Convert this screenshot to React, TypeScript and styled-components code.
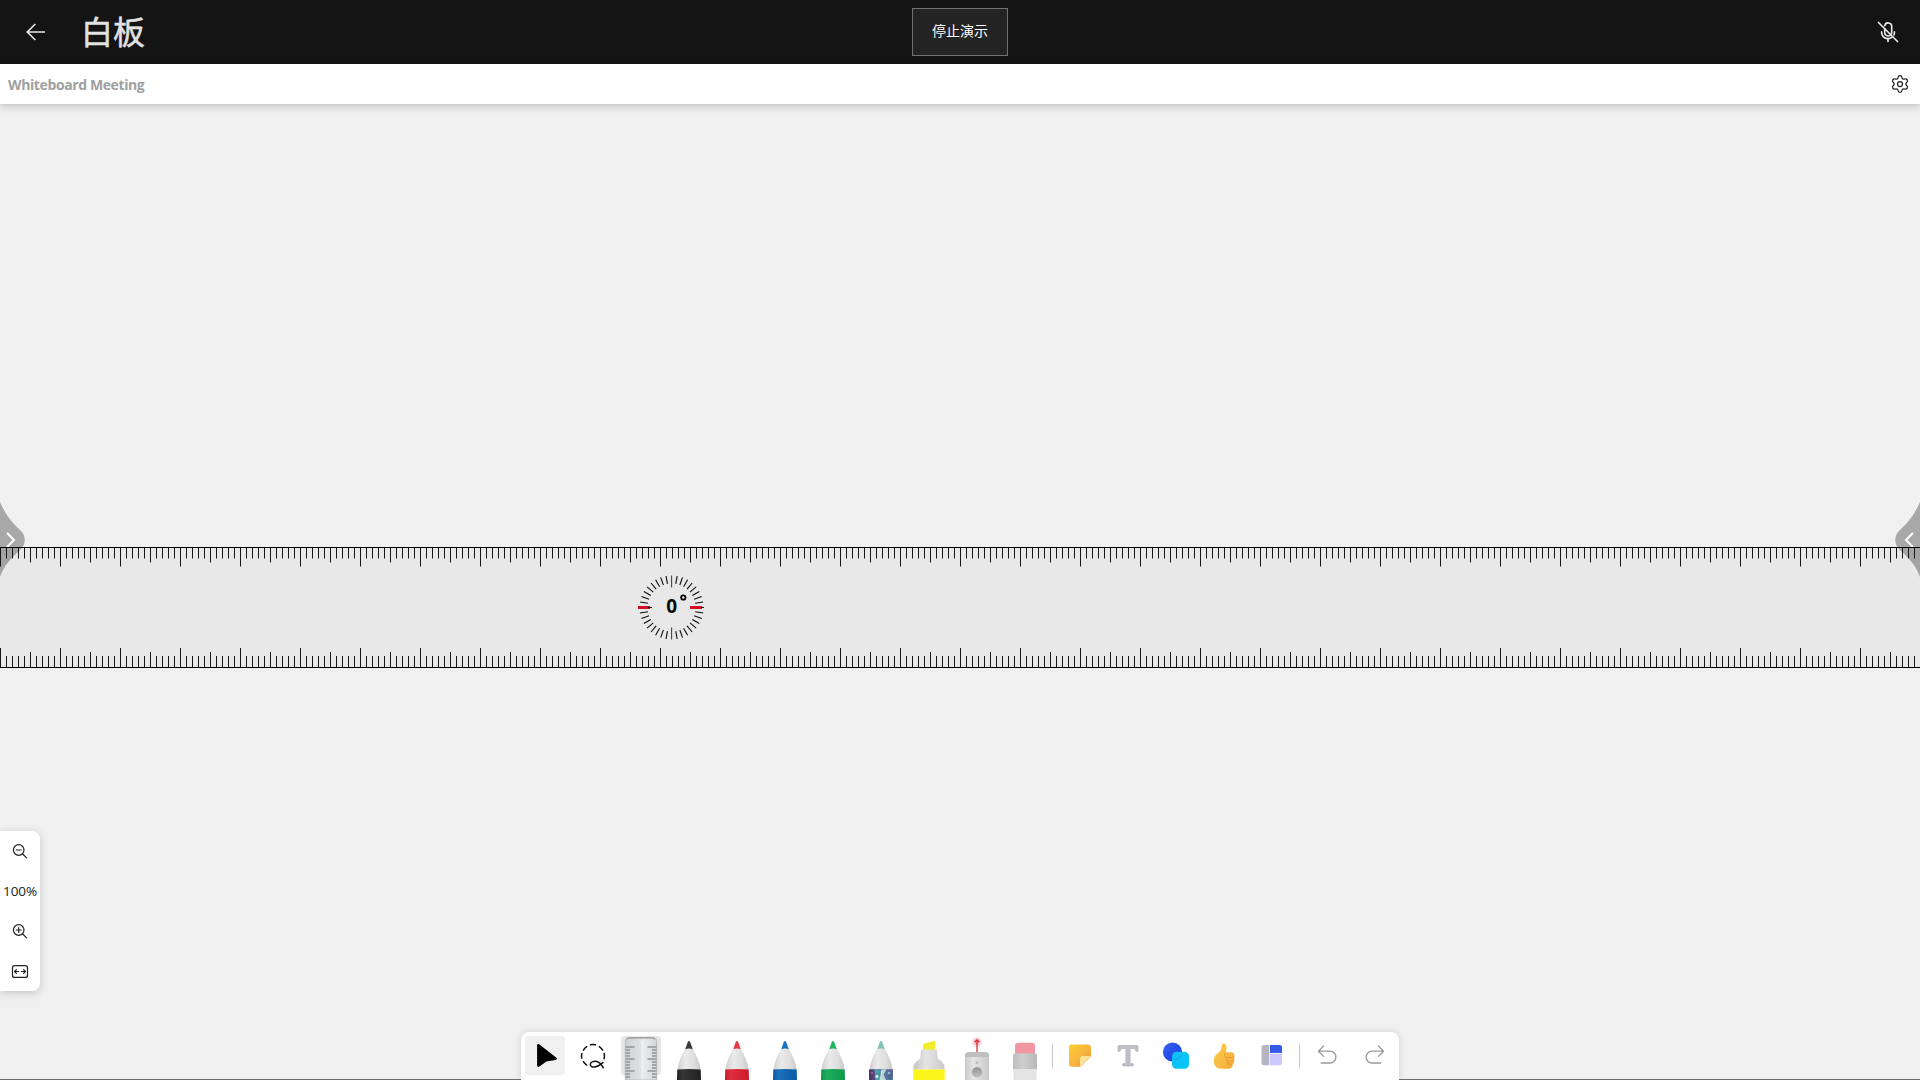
import React from "react";
import styled, { createGlobalStyle } from "styled-components";
import { Settings } from "lucide-react";

const GlobalStyle = createGlobalStyle`
  * { box-sizing: border-box; }
  html, body { margin: 0; padding: 0; overflow: hidden; }
  body { font-family: "Open Sans", "Noto Sans", "Noto Sans CJK SC", sans-serif; }
  button { border: 0; padding: 0; background: none; font: inherit; color: inherit; }
  svg { display: block; }
`;

const Screen = styled.div`
  display: flex;
  flex-direction: column;
  width: 1920px;
  height: 1080px;
  overflow: hidden;
  background: #f0f0f0;
`;

const TopBar = styled.header`
  display: grid;
  grid-template-columns: 1fr auto 1fr;
  align-items: center;
  flex: none;
  height: 64px;
  padding: 0 20px 0 24px;
  background: #141414;
  color: #e6e6e6;
`;

const TopLeft = styled.div`
  display: flex;
  align-items: center;
  gap: 33px;
`;

const TopRight = styled.div`
  display: flex;
  justify-content: flex-end;
`;

const PageTitle = styled.h1`
  margin: 0;
  padding-bottom: 3px;
  font: 400 32px/61px "Noto Sans CJK SC", sans-serif;
  color: #e2e2e2;
  -webkit-text-stroke: 0.5px #e2e2e2;
`;

const StopButton = styled.button`
  width: 96px;
  height: 48px;
  margin-right: 4px;
  border: 1px solid #727272;
  background: #242424;
  font: 400 14px/20px "Noto Sans CJK SC", sans-serif;
  color: #fff;
  padding-bottom: 4px;
`;

const MeetingBar = styled.div`
  position: relative;
  z-index: 2;
  display: flex;
  align-items: center;
  justify-content: space-between;
  flex: none;
  height: 40px;
  padding: 0 10px 0 8px;
  background: #fff;
  color: #222;
  box-shadow: 0 2px 8px rgba(0, 0, 0, 0.22);
`;

const MeetingName = styled.span`
  font: 700 14px/40px "Open Sans", "Noto Sans", sans-serif;
  letter-spacing: -0.39px;
  padding-top: 1px;
  color: #a0a0a0;
`;

const Board = styled.main`
  position: relative;
  flex: 1;
  display: flex;
  flex-direction: column;
  justify-content: flex-end;
  border-bottom: 1px solid #6b6b6b;
`;

const SideHandle = styled.button<{ $side: "left" | "right" }>`
  position: absolute;
  top: 397px;
  ${(p) => p.$side}: 0;
  width: 25px;
  height: 76px;
  transform: ${(p) => (p.$side === "right" ? "scaleX(-1)" : "none")};
`;

const RulerOverlay = styled.div`
  position: absolute;
  top: 443px;
  left: 0;
  width: 1920px;
  height: 121px;
`;

const ZoomPanel = styled.aside`
  display: flex;
  flex-direction: column;
  width: 40px;
  height: 160px;
  margin-bottom: 41px;
  background: #fff;
  border-radius: 0 8px 8px 0;
  box-shadow: 0 2px 8px rgba(0, 0, 0, 0.18);
`;

const ZoomButton = styled.button`
  width: 40px;
  height: 40px;
`;

const ZoomLevel = styled.span`
  height: 40px;
  text-align: center;
  font: 400 13.5px/41px "Open Sans", "Noto Sans", sans-serif;
  letter-spacing: -0.1px;
  color: #222;
`;

const ToolDock = styled.footer`
  display: flex;
  justify-content: center;
  height: 48px;
  margin-bottom: -1px;
`;

const Toolbar = styled.div`
  position: relative;
  display: flex;
  width: 878px;
  height: 48px;
  background: #fff;
  border-radius: 8px 8px 0 0;
  box-shadow: 0 0 6px rgba(0, 0, 0, 0.14);
`;

const ToolButton = styled.button`
  width: 48px;
  height: 48px;
`;

const Divider = styled.i`
  flex: none;
  width: 1px;
  height: 24px;
  margin: 12px 3px;
  background: #c4c4c4;
`;

function BackIcon() {
  return (
    <svg width="24" height="24" viewBox="0 0 24 24" fill="none" stroke="#e6e6e6" strokeWidth="1.7">
      <path d="M21 12H3.5M11.3 4 3.3 12l8 8" />
    </svg>
  );
}

function MutedMicIcon() {
  return (
    <svg width="24" height="24" viewBox="0 0 24 24" fill="none" stroke="#ececec" strokeWidth="1.65" strokeLinecap="round">
      <path d="M8.8 5.6a3.5 3.5 0 0 1 6.9.9v6a3.6 3.6 0 0 1-.7 2M8.7 9v3.5a3.5 3.5 0 0 0 5 3.1" />
      <path d="M5.6 11.7v1a6 6 0 0 0 6 5.9h.8c1.2 0 2.4-.5 3.3-1.2M18.4 11.7v1c0 .8-.2 1.5-.5 2.2M12 18.8v2.7M2.5 2.5l19 19" />
    </svg>
  );
}

function HandleShape() {
  return (
    <svg width="25" height="76" viewBox="0 0 25 76">
      <path d="M0 1C7 17 14 23 21 30C26 35 26 43 21 48C13 56 5 62 0 76Z" fill="#a8a8a8" />
      <path d="m7 32 7 7-7 7" fill="none" stroke="#fff" strokeWidth="2" />
    </svg>
  );
}

const tickLength = (i: number) => (i % 10 === 0 ? 19 : i % 5 === 0 ? 15 : 11);

function Ruler() {
  const ticks = Array.from({ length: 320 }, (_, i) => i);
  const cx = 671.6;
  const cy = 60.5;
  const dial = Array.from({ length: 36 }, (_, i) => i);
  return (
    <svg width="1920" height="121" viewBox="0 0 1920 121">
      <rect width="1920" height="121" fill="rgba(20,20,25,0.034)" />
      <path
        d={ticks.map((i) => `M${i * 6 + 0.5} 0v${tickLength(i) + 0.5}M${i * 6 + 0.5} 121v${-tickLength(i) - 1}`).join("")}
        stroke="#161616"
        strokeWidth="1"
      />
      <path d="M0 .5H1920M0 120.5H1920" stroke="#000" strokeWidth="1" />
      {dial.map((i) => {
        const major = i % 9 === 0;
        const a = (i * 10 * Math.PI) / 180;
        const r1 = major ? 20 : 24;
        const r2 = 32;
        return (
          <line
            key={i}
            x1={cx + Math.sin(a) * r1}
            y1={cy - Math.cos(a) * r1}
            x2={cx + Math.sin(a) * r2}
            y2={cy - Math.cos(a) * r2}
            stroke={major ? "#444" : "#0c0c0c"}
            strokeWidth="1.1"
          />
        );
      })}
      <path d="M638 60.5h12M690 60.5h12" stroke="#cf1020" strokeWidth="3" />
      <path d="M648 60.5h4M701 60.5h3" stroke="#111" strokeWidth="1" />
      <text x="671.6" y="66" textAnchor="middle" fontFamily="Open Sans, Noto Sans, sans-serif" fontWeight="700" fontSize="19" fill="#080808">
        0
      </text>
      <circle cx="683.3" cy="50.5" r="2.2" fill="none" stroke="#080808" strokeWidth="1.8" />
    </svg>
  );
}

function MagnifierIcon({ plus }: { plus?: boolean }) {
  return (
    <svg width="40" height="40" viewBox="0 0 40 40" fill="none" stroke="#222" strokeWidth="1.2" strokeLinecap="round">
      <circle cx="18.7" cy="19" r="5.3" />
      <path d="m22.7 23 3.9 3.9M16.2 19h5" />
      {plus && <path d="M18.7 16.5v5" />}
    </svg>
  );
}

function FitIcon() {
  return (
    <svg width="40" height="40" viewBox="0 0 40 40" fill="none" stroke="#222" strokeWidth="1.2" strokeLinecap="round" strokeLinejoin="round">
      <rect x="12.5" y="14.6" width="15" height="11.8" rx="2" />
      <path d="M18.6 20.5h-4M16.4 18.7l-1.800 1.800 1.800 1.800M21.400 20.500h4M23.600 18.700l1.800 1.800-1.800 1.800" />
    </svg>
  );
}

const Glyph = ({ children }: { children: React.ReactNode }) => (
  <svg width="48" height="48" viewBox="0 0 48 48">
    {children}
  </svg>
);

function ActiveTile({ color }: { color: string }) {
  return <rect x="4" y="4" width="40" height="39.5" rx="4" fill={color} />;
}

function Pen({ id, tip, band, galaxy }: { id: string; tip: string; band: string; galaxy?: boolean }) {
  return (
    <Glyph>
      <defs>
        <linearGradient id={`${id}-cone`}>
          <stop offset="0" stopColor="#cfcfcf" />
          <stop offset=".35" stopColor="#eaeaea" />
          <stop offset=".7" stopColor="#dedede" />
          <stop offset="1" stopColor="#c8c8c8" />
        </linearGradient>
        <linearGradient id={`${id}-shade`}>
          <stop offset="0" stopColor="#000" stopOpacity=".12" />
          <stop offset=".25" stopColor="#fff" stopOpacity=".08" />
          <stop offset="1" stopColor="#000" stopOpacity=".08" />
        </linearGradient>
      </defs>
      <path d="M20.500 16.500C16 24 13 31 12.300 38H35.700C35 31 32 24 27.500 16.500Z" fill={`url(#${id}-cone)`} />
      <path d="M20.200 17.300 22.600 10.400Q24 7.800 25.400 10.400L27.800 17.300Q24 15.900 20.200 17.300Z" fill={tip} />
      <path d="M12.300 37.500Q24 36.700 35.700 37.500L36 48H12Z" fill={band} />
      {galaxy && (
        <g>
          <path d="M12.200 37.500h5.500l1 10.500H12Z" fill="#4c3a72" />
          <path d="M17.500 38l6-.5-2 5 3 5.500h-6Z" fill="#3f9aa8" />
          <path d="M24 37.400h5.500l-3 5 2.500 5.600h-6.500l1-5Z" fill="#bfe0e0" />
          <path d="M30 37.400h5.700l.3 6-4 4Z" fill="#5a66a0" />
          <circle cx="15" cy="41" r="1" fill="#b766b2" />
          <circle cx="20" cy="44.500" r="1.600" fill="#d7f0ee" />
          <circle cx="32" cy="41" r="1.300" fill="#8cc8d4" />
        </g>
      )}
      <path d="M12.300 37.500Q24 36.700 35.700 37.500L36 48H12Z" fill={`url(#${id}-shade)`} />
    </Glyph>
  );
}

function PointerTool() {
  return (
    <Glyph>
      <ActiveTile color="#f0f0f0" />
      <path d="M17.400 13.200 34.600 26.800 25 28.200 17.400 33.600Z" fill="#000" stroke="#000" strokeWidth="2.600" strokeLinejoin="round" />
    </Glyph>
  );
}

function LassoTool() {
  return (
    <Glyph>
      <g fill="none" stroke="#111" strokeWidth="1.500" strokeLinecap="round">
        <path d="M21.500 12.800a11.300 11.300 0 0 1 5 0M30.300 14.700a11.300 11.300 0 0 1 3.300 3.400M35.200 21.500a11.300 11.300 0 0 1-.1 5.200M17.700 14.700a11.300 11.300 0 0 0-3.300 3.400M12.800 21.500a11.300 11.300 0 0 0 0 4.600M14.400 29.700a11.300 11.300 0 0 0 3.400 3.500" />
        <path d="M34.300 35.800C32.500 32.600 30.600 29.300 26.700 29.300c-3 0-5.400 1.500-5.400 3.200 0 1.800 2 2.800 4.400 2.500 4.200-.5 5.900-2.500 8.200-4.400" />
      </g>
    </Glyph>
  );
}

function RulerTool() {
  return (
    <Glyph>
      <defs>
        <linearGradient id="ruler-body">
          <stop offset="0" stopColor="#cfd1d3" />
          <stop offset=".48" stopColor="#dfe0e2" />
          <stop offset=".52" stopColor="#eceeef" />
          <stop offset="1" stopColor="#d4d6d8" />
        </linearGradient>
      </defs>
      <ActiveTile color="#e6e6e6" />
      <path d="M8.300 48V9.500q0-4 4-4h23.400q4 0 4 4V48Z" fill="url(#ruler-body)" stroke="#b0b0b0" strokeWidth=".8" />
      <path d="M10 7.200q1-1.200 3-1.200h22q2 0 3 1.200" fill="none" stroke="#8d8d8d" strokeWidth="1" />
      <path
        d="M8.500 15H17.500M8.500 18H13M8.500 21H13M8.500 24H13M8.500 27H17.500M8.500 30H13M8.500 33H13M8.500 36H13M8.500 39H17.500M8.500 42H13M8.500 45H13M39.500 15H30.500M39.500 18H35M39.500 21H35M39.500 24H35M39.500 27H30.500M39.500 30H35M39.500 33H35M39.500 36H35M39.500 39H30.500M39.500 42H35M39.500 45H35"
        stroke="#929497"
        strokeWidth="1.500"
      />
    </Glyph>
  );
}

function HighlighterTool() {
  return (
    <Glyph>
      <defs>
        <linearGradient id="hl-body">
          <stop offset="0" stopColor="#c6c6c6" />
          <stop offset=".4" stopColor="#e4e4e4" />
          <stop offset="1" stopColor="#cbcbcb" />
        </linearGradient>
      </defs>
      <path d="M18 18V13Q18 11.800 19.300 11.400L29 9.100Q30.300 8.900 30.300 10V18Z" fill="#f2ee2a" />
      <path d="M16 18.500q0-1 1-1h14q1 0 1 1l1 8.500q5.500 3 6.500 7v3.500h-31V34q1-4 6.500-7Z" fill="url(#hl-body)" />
      <path d="M8.300 37.500H39.700V48H8.300Z" fill="#fbf51c" />
    </Glyph>
  );
}

function LaserTool() {
  return (
    <Glyph>
      <defs>
        <linearGradient id="laser-body">
          <stop offset="0" stopColor="#c9c9c9" />
          <stop offset=".35" stopColor="#e5e5e5" />
          <stop offset="1" stopColor="#c9c9c9" />
        </linearGradient>
        <radialGradient id="laser-glow">
          <stop offset="0" stopColor="#e8303e" stopOpacity=".6" />
          <stop offset="1" stopColor="#e8303e" stopOpacity="0" />
        </radialGradient>
        <linearGradient id="laser-knob" x2="0" y2="1">
          <stop offset="0" stopColor="#929292" />
          <stop offset="1" stopColor="#c2c2c2" />
        </linearGradient>
      </defs>
      <circle cx="24" cy="10" r="5.500" fill="url(#laser-glow)" />
      <path d="M24 8V20.500M21.800 10 24 7.800l2.200 2.200" stroke="#da3040" strokeWidth="1.300" fill="none" />
      <path d="M12 48V24q0-4 4-4h16q4 0 4 4V48Z" fill="url(#laser-body)" />
      <path d="M12 25v-1q0-4 4-4h16q4 0 4 4v1Z" fill="#bebebe" />
      <path d="M22.300 31.600 24 29.200l1.700 2.400Z" fill="#aaa" />
      <circle cx="24" cy="40.300" r="5.200" fill="url(#laser-knob)" />
    </Glyph>
  );
}

function EraserTool() {
  return (
    <Glyph>
      <defs>
        <linearGradient id="er-body">
          <stop offset="0" stopColor="#bdbdbd" />
          <stop offset=".4" stopColor="#cecece" />
          <stop offset="1" stopColor="#b9b9b9" />
        </linearGradient>
      </defs>
      <path d="M14 22V14q0-3.300 3.300-3.300h13.400q3.300 0 3.300 3.300v8Z" fill="#f496a2" />
      <path d="M12 37.500V23.500q0-2 2-2.300h20q2 .3 2 2.300v14Z" fill="url(#er-body)" />
      <path d="M12.500 37H35.500V48H12.500Z" fill="#e4e4e4" />
    </Glyph>
  );
}

function NoteTool() {
  return (
    <Glyph>
      <defs>
        <linearGradient id="note-fill" x2="1" y2="1">
          <stop offset="0" stopColor="#fbd02f" />
          <stop offset=".55" stopColor="#f7b340" />
          <stop offset="1" stopColor="#ec8b35" />
        </linearGradient>
      </defs>
      <path d="M16 12.500h16q3 0 3 3V24.500L24.500 34.700H16q-3 0-3-3V15.500q0-3 3-3Z" fill="url(#note-fill)" />
      <path d="M24 34.700V27q0-3 3-3h8Z" fill="#fde39a" />
    </Glyph>
  );
}

function TextTool() {
  return (
    <Glyph>
      <path
        d="M15 13.500h18q1 0 1 1v4.300q0 .7-.8.700h-.8q-.6 0-.8-.7l-.5-2.200h-5V31.500h2.400q.8 0 .8.800v1q0 .8-.8.800h-9q-.8 0-.8-.8v-1q0-.8.800-.8h2.400V16.600h-5l-.5 2.200q-.2.700-.8.700h-.8q-.8 0-.8-.7V14.500q0-1 1-1Z"
        fill="#c2bec8"
        stroke="#aaa6b0"
        strokeWidth=".6"
      />
    </Glyph>
  );
}

function ShapesTool() {
  return (
    <Glyph>
      <defs>
        <linearGradient id="shape-blue" x2="1" y2="1">
          <stop offset="0" stopColor="#3a62e8" />
          <stop offset="1" stopColor="#143df0" />
        </linearGradient>
        <linearGradient id="shape-cyan" x2="1" y2="1">
          <stop offset="0" stopColor="#12bdf4" />
          <stop offset="1" stopColor="#02c8fa" />
        </linearGradient>
      </defs>
      <circle cx="20.500" cy="20" r="9.600" fill="url(#shape-blue)" />
      <rect x="20" y="19.700" width="17" height="17" rx="4.500" fill="url(#shape-cyan)" />
      <path d="M22.500 27.800q4.500 0 7.200-4.800" fill="none" stroke="#169fe8" strokeWidth="1" />
    </Glyph>
  );
}

function ThumbTool() {
  return (
    <Glyph>
      <defs>
        <linearGradient id="thumb-fill" x2="1" y2="1">
          <stop offset="0" stopColor="#ffd04a" />
          <stop offset="1" stopColor="#f4a93a" />
        </linearGradient>
      </defs>
      <path
        d="M22 12.500c.6-1.500 3.400-1.300 4.100.8.900 2.300.2 5.200-.3 6.900h5.800c1.800 0 2.600 1 2.400 2.300.8.700.9 2.200.1 3.200.7 1 .6 2.400-.2 3.200.4 1.200-.1 2.500-1.100 3 .1 3.400-1.500 4.900-4.500 4.900h-6.700c-5 0-7.800-3-7.800-8 0-4.100 2-6.400 5-8.500 2-1.400 2.700-4.300 3.200-7.800Z"
        fill="url(#thumb-fill)"
      />
      <path d="M26 20.600q-2 .8-1.500 3 .4 1.800 2.500 1.900h7M27 25.600q-1.700 1.700.2 3.400h6.500M27.500 29.200q-1 1.500.5 2.800h4.700" fill="none" stroke="#de8d2b" strokeWidth=".7" />
    </Glyph>
  );
}

function TemplateTool() {
  return (
    <Glyph>
      <path d="M16 13h6v20.300h-6q-2.500 0-2.500-2.500V15.500Q13.500 13 16 13Z" fill="#b7b5c5" />
      <path d="M22 13h9.500q2.500 0 2.500 2.500v5.800H22Z" fill="#315be8" />
      <path d="M22 21.700h12v9.100q0 2.500-2.500 2.500H22Z" fill="#cbc9fb" />
      <path d="M21.500 13v20.300M21.500 21.400H34" stroke="#f4f3ff" strokeWidth=".9" />
    </Glyph>
  );
}

function HistoryTool({ forward }: { forward?: boolean }) {
  return (
    <Glyph>
      <path
        d="M20.500 14 15.500 19.200 20.500 24.400M15.500 19.200H27a5.900 5.900 0 0 1 0 11.800H18.200"
        transform={forward ? "translate(48 0) scale(-1 1)" : undefined}
        fill="none"
        stroke="#9a9a9a"
        strokeWidth="1.300"
        strokeLinecap="round"
        strokeLinejoin="round"
      />
    </Glyph>
  );
}

export default function App() {
  return (
    <>
      <GlobalStyle />
      <Screen>
        <TopBar>
          <TopLeft>
            <BackIcon />
            <PageTitle>白板</PageTitle>
          </TopLeft>
          <StopButton>停止演示</StopButton>
          <TopRight>
            <MutedMicIcon />
          </TopRight>
        </TopBar>
        <MeetingBar>
          <MeetingName>Whiteboard Meeting</MeetingName>
          <Settings size={20} strokeWidth={1.5} />
        </MeetingBar>
        <Board>
          <SideHandle $side="left">
            <HandleShape />
          </SideHandle>
          <SideHandle $side="right">
            <HandleShape />
          </SideHandle>
          <RulerOverlay>
            <Ruler />
          </RulerOverlay>
          <ZoomPanel>
            <ZoomButton>
              <MagnifierIcon />
            </ZoomButton>
            <ZoomLevel>100%</ZoomLevel>
            <ZoomButton>
              <MagnifierIcon plus />
            </ZoomButton>
            <ZoomButton>
              <FitIcon />
            </ZoomButton>
          </ZoomPanel>
          <ToolDock>
            <Toolbar>
              <ToolButton><PointerTool /></ToolButton>
              <ToolButton><LassoTool /></ToolButton>
              <ToolButton><RulerTool /></ToolButton>
              <ToolButton><Pen id="black" tip="#3a3a3a" band="#242424" /></ToolButton>
              <ToolButton><Pen id="red" tip="#e23a48" band="#dd1c2e" /></ToolButton>
              <ToolButton><Pen id="blue" tip="#1a72c0" band="#0a62b4" /></ToolButton>
              <ToolButton><Pen id="green" tip="#16b860" band="#0ca650" /></ToolButton>
              <ToolButton><Pen id="galaxy" tip="#82c4bc" band="#55789c" galaxy /></ToolButton>
              <ToolButton><HighlighterTool /></ToolButton>
              <ToolButton><LaserTool /></ToolButton>
              <ToolButton><EraserTool /></ToolButton>
              <Divider />
              <ToolButton><NoteTool /></ToolButton>
              <ToolButton><TextTool /></ToolButton>
              <ToolButton><ShapesTool /></ToolButton>
              <ToolButton><ThumbTool /></ToolButton>
              <ToolButton><TemplateTool /></ToolButton>
              <Divider />
              <ToolButton><HistoryTool /></ToolButton>
              <ToolButton><HistoryTool forward /></ToolButton>
            </Toolbar>
          </ToolDock>
        </Board>
      </Screen>
    </>
  );
}
